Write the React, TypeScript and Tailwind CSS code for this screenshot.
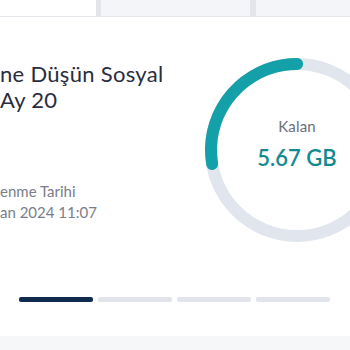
import React from 'react';

const segments = [true, false, false, false];

const UsageRing: React.FC = () => {
  const r = 86;
  const c = 2 * Math.PI * r;
  const used = c * 0.276;
  return (
    <div className="relative w-[196px] h-[196px] shrink-0">
      <svg width="196" height="196" viewBox="0 0 196 196">
        <circle cx="98" cy="98" r={r} fill="none" stroke="#e1e5ee" strokeWidth="12" />
        <circle
          cx="98"
          cy="98"
          r={r}
          fill="none"
          stroke="#14a0a8"
          strokeWidth="12"
          strokeLinecap="round"
          strokeDasharray={`${used} ${c}`}
          transform="rotate(170.6 98 98)"
        />
      </svg>
      <div className="absolute inset-0 flex flex-col items-center justify-center pb-[13px]">
        <span className="text-[15px] leading-[20px] tracking-[0.2px] text-[#6b6e7c]">Kalan</span>
        <span className="mt-[9px] text-[22px] leading-[26px] font-semibold text-[#138a8f]">5.67 GB</span>
      </div>
    </div>
  );
};

const App: React.FC = () => {
  return (
    <div
      className="w-[350px] h-[350px] overflow-hidden bg-white flex flex-col"
      style={{ fontFamily: 'Lato, "Noto Sans", sans-serif' }}
    >
      <div className="h-[17px] shrink-0 flex border-b border-[#e6e7ec]">
        <div className="w-[96px] bg-white" />
        <div className="w-[5px] bg-[#e4e5eb]" />
        <div className="w-[149px] bg-[#f4f5f9]" />
        <div className="w-[6px] bg-[#e4e5eb]" />
        <div className="flex-1 bg-[#f4f5f9]" />
      </div>

      <div className="flex">
        <div className="w-[199px] shrink-0 pt-[44px]">
          <p className="text-[22px] leading-[26px] tracking-[0.3px] text-[#2a2d3e]">
            ne Düşün Sosyal
            <br />
            Ay 20
          </p>
          <div className="mt-[68px] text-[15px] leading-[21px] text-[#7a7d8a]">
            <p>enme Tarihi</p>
            <p>an 2024 11:07</p>
          </div>
        </div>
        <div className="pt-[35px]">
          <UsageRing />
        </div>
      </div>

      <div className="mt-[49px] pl-[19px] flex gap-[5px]">
        {segments.map((active, i) => (
          <div
            key={i}
            className={`w-[74px] h-[5px] rounded-[2px] ${active ? 'bg-[#0f2c4e]' : 'bg-[#e2e4ec]'}`}
          />
        ))}
      </div>

      <div className="mt-auto h-[14px] bg-[#f6f7f9]" />
    </div>
  );
};

export default App;
